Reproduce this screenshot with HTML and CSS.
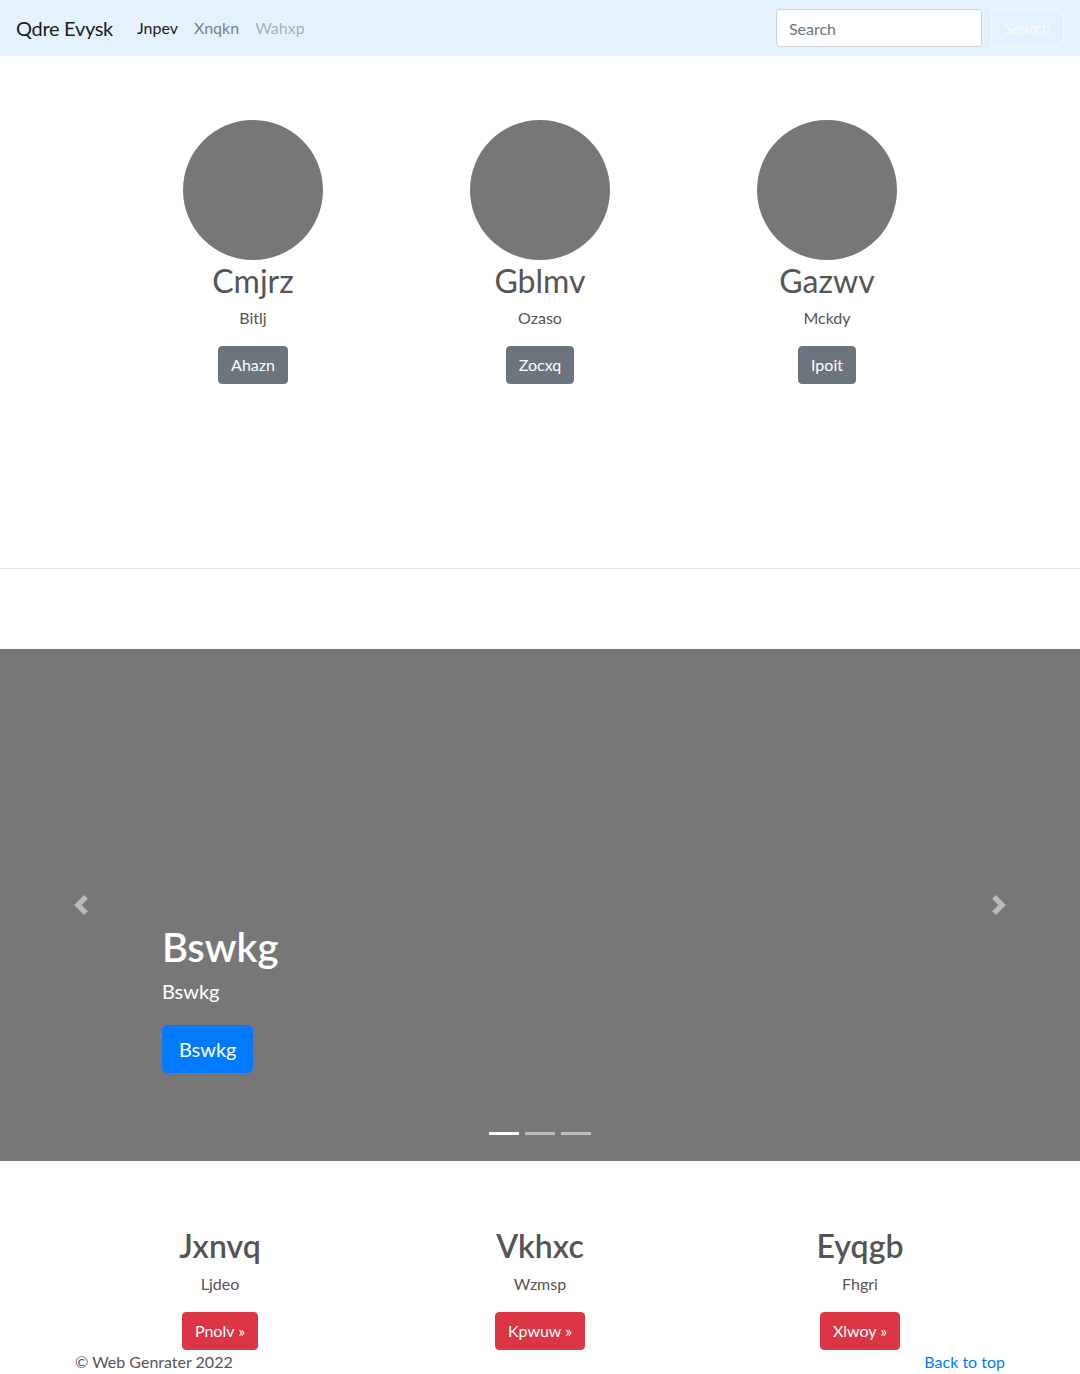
FILE: index.html
```html
<!DOCTYPE html>
<html lang="en">
<head>
<meta charset="utf-8">
<title>Qdre Evysk</title>
<link rel="stylesheet" href="styles.css">
</head>
<body>
<nav class="navbar">
  <a class="brand" href="#">Qdre Evysk</a>
  <ul class="nav">
    <li><a class="nav-link active" href="#">Jnpev</a></li>
    <li><a class="nav-link" href="#">Xnqkn</a></li>
    <li><a class="nav-link disabled" href="#">Wahxp</a></li>
  </ul>
  <form class="search">
    <input class="search-input" type="text" placeholder="Search">
    <button class="search-btn" type="button">Search</button>
  </form>
</nav>

<main>
  <section class="team">
    <div class="team-col">
      <svg class="avatar" width="140" height="140" viewBox="0 0 140 140"><circle cx="70" cy="70" r="70" fill="#777"/></svg>
      <h2 class="title">Cmjrz</h2>
      <p class="sub">Bitlj</p>
      <a class="btn btn-secondary" href="#">Ahazn</a>
    </div>
    <div class="team-col">
      <svg class="avatar" width="140" height="140" viewBox="0 0 140 140"><circle cx="70" cy="70" r="70" fill="#777"/></svg>
      <h2 class="title">Gblmv</h2>
      <p class="sub">Ozaso</p>
      <a class="btn btn-secondary" href="#">Zocxq</a>
    </div>
    <div class="team-col">
      <svg class="avatar" width="140" height="140" viewBox="0 0 140 140"><circle cx="70" cy="70" r="70" fill="#777"/></svg>
      <h2 class="title">Gazwv</h2>
      <p class="sub">Mckdy</p>
      <a class="btn btn-secondary" href="#">Ipoit</a>
    </div>
  </section>

  <hr class="divider">

  <div class="carousel">
    <div class="caption">
      <h1 class="caption-title">Bswkg</h1>
      <p class="caption-text">Bswkg</p>
      <div class="caption-action"><a class="btn btn-lg btn-primary" href="#">Bswkg</a></div>
    </div>
    <a class="control control-prev" href="#">
      <svg width="20" height="20" viewBox="0 0 8 8"><path fill="#fff" d="M5.25 0l-4 4 4 4 1.5-1.5L4.25 4l2.5-2.5L5.25 0z"/></svg>
    </a>
    <a class="control control-next" href="#">
      <svg width="20" height="20" viewBox="0 0 8 8"><path fill="#fff" d="M2.75 0l-1.5 1.5L3.75 4l-2.5 2.5L2.75 8l4-4-4-4z"/></svg>
    </a>
    <div class="indicators">
      <span class="indicator active"></span>
      <span class="indicator"></span>
      <span class="indicator"></span>
    </div>
  </div>

  <section class="features">
    <div class="feature-col">
      <h2 class="title title-strong">Jxnvq</h2>
      <p class="sub">Ljdeo</p>
      <a class="btn btn-danger" href="#">Pnolv &raquo;</a>
    </div>
    <div class="feature-col">
      <h2 class="title title-strong">Vkhxc</h2>
      <p class="sub">Wzmsp</p>
      <a class="btn btn-danger" href="#">Kpwuw &raquo;</a>
    </div>
    <div class="feature-col">
      <h2 class="title title-strong">Eyqgb</h2>
      <p class="sub">Fhgri</p>
      <a class="btn btn-danger" href="#">Xlwoy &raquo;</a>
    </div>
  </section>
</main>

<footer class="footer">
  <p class="copy">&copy; Web Genrater 2022</p>
  <p class="top-link"><a href="#">Back to top</a></p>
</footer>
</body>
</html>
```

FILE: styles.css
```css
* { box-sizing: border-box; }

body {
  margin: 0;
  font-family: Lato, "Open Sans", sans-serif;
  font-size: 16px;
  line-height: 1.5;
  color: #212529;
  background: #fff;
}

/* navbar */
.navbar {
  display: flex;
  align-items: center;
  height: 56px;
  padding: 8px 16px;
  background: #e3f2fd;
}
.brand {
  font-size: 20px;
  line-height: 30px;
  padding: 5px 0;
  margin-right: 16px;
  letter-spacing: -0.3px;
  color: rgba(0, 0, 0, .9);
  text-decoration: none;
}
.nav {
  display: flex;
  list-style: none;
  margin: 0;
  padding: 0;
}
.nav-link {
  display: block;
  padding: 8px;
  color: rgba(0, 0, 0, .5);
  text-decoration: none;
}
.nav-link.active { color: rgba(0, 0, 0, .9); }
.nav-link.disabled { color: rgba(0, 0, 0, .3); }

.search {
  margin: 0 0 0 auto;
  display: flex;
  align-items: center;
}
.search-input {
  width: 206px;
  height: 38px;
  padding: 6px 12px;
  font: inherit;
  color: #495057;
  background: #fff;
  border: 1px solid #ced4da;
  border-radius: 4px;
  margin-right: 9px;
}
.search-input::placeholder { color: #6c757d; }
.search-btn {
  height: 38px;
  padding: 6px 12px;
  font: inherit;
  color: #f8f9fa;
  background: transparent;
  border: 1px solid #f8f9fa;
  border-radius: 4px;
}

/* common */
.title {
  margin: 2px 0 6px;
  font-size: 32px;
  line-height: 1.2;
  font-weight: 400;
  color: #555;
}
.title-strong { font-weight: 600; }
.sub {
  margin: 0 0 16px;
  color: #555;
}
.btn {
  display: inline-block;
  padding: 6px 12px;
  font-size: 16px;
  line-height: 24px;
  border: 1px solid transparent;
  border-radius: 4px;
  color: #fff;
  text-decoration: none;
}
.btn-secondary { background: #6c757d; border-color: #6c757d; }
.btn-danger { background: #dc3545; border-color: #dc3545; }
.btn-primary { background: #007bff; border-color: #007bff; }
.btn-lg {
  padding: 8px 16px;
  font-size: 20px;
  line-height: 30px;
  border-radius: 5px;
}

/* team */
.team {
  display: grid;
  grid-template-columns: repeat(3, 287px);
  justify-content: center;
  padding: 64px 0 80px;
}
.team-col {
  display: flex;
  flex-direction: column;
  align-items: center;
  text-align: center;
  margin-bottom: 24px;
}
.avatar { display: block; }

.divider {
  margin: 80px 0;
  border: 0;
  border-top: 1px solid rgba(0, 0, 0, .1);
  height: 0;
}

/* carousel */
.carousel {
  position: relative;
  height: 512px;
  background: #777;
  margin-bottom: 64px;
}
.caption {
  position: absolute;
  left: 15%;
  right: 15%;
  bottom: 48px;
  padding: 20px 0;
  color: #fff;
  display: flex;
  flex-direction: column;
  align-items: flex-start;
}
.caption-title {
  margin: 2px 0 6px;
  font-size: 40px;
  line-height: 1.2;
  font-weight: 600;
}
.caption-text {
  margin: 0 0 20px;
  font-size: 20px;
  line-height: 1.4;
}
.caption-action {
  display: flex;
  margin-bottom: 20px;
}
.control {
  position: absolute;
  top: 0;
  bottom: 0;
  width: 15%;
  display: flex;
  align-items: center;
  justify-content: center;
  opacity: .5;
}
.control-prev { left: 0; }
.control-next { right: 0; }
.indicators {
  position: absolute;
  left: 0;
  right: 0;
  bottom: 26px;
  display: flex;
  justify-content: center;
}
.indicator {
  width: 30px;
  height: 3px;
  margin: 0 3px;
  background: #fff;
  opacity: .5;
}
.indicator.active { opacity: 1; }

/* features */
.features {
  width: 960px;
  margin: 0 auto;
  display: grid;
  grid-template-columns: repeat(3, 1fr);
}
.feature-col {
  display: flex;
  flex-direction: column;
  align-items: center;
  text-align: center;
  padding: 0 15px;
}

/* footer */
.footer {
  width: 960px;
  margin: 0 auto;
  padding: 0 15px;
  display: flex;
  justify-content: space-between;
}
.footer p { margin: 0 0 16px; }
.copy { color: #555; }
.top-link a { color: #007bff; text-decoration: none; }
```
